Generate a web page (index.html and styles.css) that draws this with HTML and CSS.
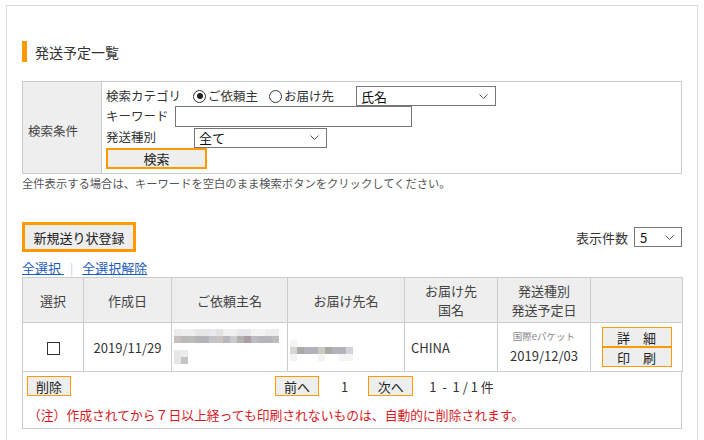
FILE: index.html
```html
<!DOCTYPE html>
<html lang="ja">
<head>
<meta charset="utf-8">
<link rel="stylesheet" href="styles.css">
</head>
<body>
<div class="panel">
  <h2 class="title">発送予定一覧</h2>

  <table class="search">
    <tr>
      <th class="search-label">検索条件</th>
      <td class="search-body">
        <div class="srow r1">
          <span class="lbl-cat">検索カテゴリ</span>
          <span class="radio on"></span><span class="rtext1">ご依頼主</span>
          <span class="radio"></span><span class="rtext2">お届け先</span>
          <div class="select sel-name"><span>氏名</span>
            <svg class="chev" width="9" height="5" viewBox="0 0 9 5"><path d="M0.5 0.5 L4.5 4.5 L8.5 0.5" fill="none" stroke="#555" stroke-width="1"/></svg>
          </div>
        </div>
        <div class="srow r2">
          <span class="lbl-key">キーワード</span>
          <div class="textbox"></div>
        </div>
        <div class="srow r3">
          <span class="lbl-type">発送種別</span>
          <div class="select sel-type"><span>全て</span>
            <svg class="chev" width="9" height="5" viewBox="0 0 9 5"><path d="M0.5 0.5 L4.5 4.5 L8.5 0.5" fill="none" stroke="#555" stroke-width="1"/></svg>
          </div>
        </div>
        <div class="srow r4">
          <button class="btn-search">検索</button>
        </div>
      </td>
    </tr>
  </table>
  <p class="hint">全件表示する場合は、キーワードを空白のまま検索ボタンをクリックしてください。</p>

  <div class="toolbar">
    <button class="btn-new">新規送り状登録</button>
    <div class="perpage">
      <span class="perpage-label">表示件数</span>
      <div class="select sel-count"><span>5</span>
        <svg class="chev" width="9" height="5" viewBox="0 0 9 5"><path d="M0.5 0.5 L4.5 4.5 L8.5 0.5" fill="none" stroke="#555" stroke-width="1"/></svg>
      </div>
    </div>
  </div>

  <div class="links">
    <a href="#" class="link">全選択 </a><span class="sep">|</span><a href="#" class="link">全選択解除</a>
  </div>

  <table class="list">
    <colgroup>
      <col class="c1"><col class="c2"><col class="c3"><col class="c4"><col class="c5"><col class="c6"><col class="c7">
    </colgroup>
    <tr class="head">
      <th>選択</th>
      <th>作成日</th>
      <th>ご依頼主名</th>
      <th>お届け先名</th>
      <th><div class="hl">お届け先</div><div class="hl">国名</div></th>
      <th><div class="hl">発送種別</div><div class="hl">発送予定日</div></th>
      <th></th>
    </tr>
    <tr class="data">
      <td class="center"><span class="checkbox"></span></td>
      <td class="center">2019/11/29</td>
      <td class="blur-cell">
        <div class="blur b1a"></div>
        <div class="blur b1b"></div>
        <div class="blur b1c"></div>
        <div class="blur b1d"></div>
      </td>
      <td class="blur-cell2">
        <div class="blur b2a"></div>
        <div class="blur b2b"></div>
        <div class="blur b2c"></div>
      </td>
      <td class="country">CHINA</td>
      <td class="center type-cell">
        <div class="type-name">国際eパケット</div>
        <div class="type-date">2019/12/03</div>
      </td>
      <td class="center act-cell">
        <button class="btn-act">詳　細</button>
        <button class="btn-act">印　刷</button>
      </td>
    </tr>
  </table>
  <div class="footer">
    <div class="pager">
      <button class="btn-sm btn-del">削除</button>
      <button class="btn-sm btn-prev">前へ</button>
      <span class="page-no">1</span>
      <button class="btn-sm btn-next">次へ</button>
      <span class="page-count">1 &nbsp;- &nbsp;1 / 1 件</span>
    </div>
    <p class="notice">（注）作成されてから７日以上経っても印刷されないものは、自動的に削除されます。</p>
  </div>
</div>
</body>
</html>
```

FILE: styles.css
```css
* { box-sizing: border-box; }
html, body { margin: 0; padding: 0; background: #fff; }
body {
  font-family: "Noto Sans CJK JP", "Noto Sans", sans-serif;
  color: #333;
  font-size: 12.5px;
  overflow: hidden;
}
button { font-family: inherit; cursor: pointer; }

.panel {
  margin: 5px 0 0 6px;
  width: 692px;
  height: 440px;
  border: 1px solid #ddd;
  border-bottom: none;
  padding: 35px 15px 0 15px;
}

.title {
  margin: 0;
  display: flex;
  align-items: center;
  height: 21px;
  border-left: 5px solid #f90;
  padding-left: 8px;
  font-size: 14px;
  font-weight: normal;
  color: #333;
  line-height: 1;
}

/* search box */
.search {
  margin-top: 19px;
  width: 660px;
  border-collapse: collapse;
  border: 1px solid #ccc;
}
.search-label {
  width: 79px;
  background: #eee;
  border-right: 1px solid #ccc;
  text-align: left;
  font-weight: normal;
  padding: 6px 0 0 5px;
  vertical-align: middle;
  font-size: 12.5px;
  color: #444;
}
.search-body { padding: 4px 5px 4px 4px; vertical-align: top; }
.srow { display: flex; align-items: center; line-height: 1; }
.r1 { height: 20px; }
.r2 { height: 21px; }
.r3 { height: 21px; }
.r4 { height: 21px; }
.lbl-cat { width: 87px; }
.lbl-key { width: 69px; }
.lbl-type { width: 88px; }
.radio {
  display: inline-block;
  width: 13px;
  height: 13px;
  border: 1px solid #333;
  border-radius: 50%;
  margin-right: 2px;
  position: relative;
  background: #fff;
}
.radio.on::after {
  content: "";
  position: absolute;
  left: 2.5px; top: 2.5px;
  width: 6px; height: 6px;
  border-radius: 50%;
  background: #222;
}
.rtext1 { width: 61px; }
.rtext2 { width: 72px; }

.select {
  display: flex;
  align-items: center;
  justify-content: space-between;
  height: 20px;
  border: 1px solid #777;
  background: #fff;
  padding: 0 7px 0 4px;
  font-size: 13px;
  color: #111;
}
.sel-name { width: 140px; }
.sel-type { width: 133px; }
.sel-count { width: 48px; }
.chev { display: block; }

.textbox {
  width: 237px;
  height: 21px;
  border: 1px solid #767676;
  background: #fff;
}
.btn-search {
  width: 101px;
  height: 21px;
  border: 2px solid #f90;
  background: #eee;
  font-size: 13px;
  color: #222;
  padding: 0;
  line-height: 1;
}

.hint {
  margin: 1px 0 0 0;
  font-size: 11.3px;
  line-height: 16px;
  color: #555;
}

.toolbar {
  margin-top: 31px;
  display: flex;
  align-items: center;
  justify-content: space-between;
  height: 30px;
}
.btn-new {
  width: 114px;
  height: 30px;
  border: 3px solid #f90;
  background: #eee;
  font-size: 13px;
  color: #222;
  padding: 0;
  line-height: 1;
}
.perpage { display: flex; align-items: center; }
.perpage-label { font-size: 13px; color: #333; margin-right: 6px; }
.sel-count { padding-left: 5px; }

.links {
  margin-top: 8px;
  height: 17px;
  line-height: 16px;
  font-size: 13px;
}
.link { color: #1d5cb8; text-decoration: underline; }
.sep { color: #ccc; margin: 0 9px 0 6px; font-size: 12px; }

/* list table */
.list {
  width: 660px;
  border-collapse: collapse;
  table-layout: fixed;
}
.list th, .list td { border: 1px solid #ccc; padding: 0; }
.c1 { width: 61px; }
.c2 { width: 88px; }
.c3 { width: 116px; }
.c4 { width: 117px; }
.c5 { width: 93px; }
.c6 { width: 93px; }
.c7 { width: 92px; }
.head th {
  height: 45px;
  background: #eee;
  font-weight: normal;
  color: #444;
  font-size: 13px;
  line-height: 17px;
  text-align: center;
}
.hl { height: 19px; line-height: 19px; }
.data td { height: 49px; font-size: 13px; color: #333; }
.center { text-align: center; }
.checkbox {
  display: inline-block;
  width: 13px;
  height: 13px;
  border: 1px solid #333;
  background: #fff;
  vertical-align: middle;
  margin-left: 1px;
}
.country { padding-left: 6px !important; }
.type-name { font-size: 9.5px; color: #888; line-height: 14px; }
.type-date { font-size: 13px; line-height: 18px; margin-top: 4px; color: #333; }
.act-cell { vertical-align: middle; }
.btn-act {
  display: block;
  margin: 0 auto;
  width: 70px;
  height: 20px;
  border: 1px solid #f90;
  background: #eee;
  font-size: 13px;
  color: #222;
  padding: 0;
  line-height: 1;
}

/* pixelated blurred names */
.blur-cell, .blur-cell2 { vertical-align: top; padding-left: 2px !important; }
.blur { height: 7px; }
.b1a { margin-top: 6px; width: 105px;
  background: linear-gradient(90deg, #ebebeb 0 7px, #eeeeee 7px 21px, #e6e6e6 21px 35px, #e9e9ee 35px 42px, #e2e2e2 42px 49px, #f0f0f0 49px 63px, #e8e8ea 63px 77px, #f3f3f3 77px 91px, #ededed 91px 105px); }
.b1b { width: 105px;
  background: linear-gradient(90deg, #c6c1bf 0 7px, #b9b9b9 7px 14px, #bdbcb6 14px 21px, #b5b5b9 21px 35px, #c3c3c6 35px 42px, #c9c7bd 42px 49px, #b7b7c0 49px 56px, #cbcbcb 56px 63px, #b7b2b2 63px 70px, #ab9ea2 70px 77px, #bcbcc0 77px 84px, #b5b5bb 84px 98px, #bdbdbd 98px 105px); }
.b1c { margin-top: 7px; width: 14px;
  background: linear-gradient(90deg, #e8e8e8 0 7px, #ececec 7px 14px); }
.b1d { width: 14px;
  background: linear-gradient(90deg, #e6e6e6 0 7px, #c8c2c2 7px 14px); }
.b2a { margin-top: 17px; width: 7px; background: #f4f4f4; }
.b2b { width: 63px;
  background: linear-gradient(90deg, #d8d6d2 0 7px, #a8aaa4 7px 14px, #b2b2ba 14px 28px, #ccc8c2 28px 35px, #a8aaa4 35px 42px, #b4b2bc 42px 56px, #d4d4d8 56px 63px); }
.b2c { width: 63px;
  background: linear-gradient(90deg, #f2f2f2 0 7px, #ffffff 7px 28px, #f2f2f2 28px 35px, #ffffff 35px 49px, #f4f4f4 49px 63px); }

/* footer */
.footer {
  width: 660px;
  height: 57px;
  border: 1px solid #ccc;
  border-top: none;
  padding: 4px 4px 0 4px;
}
.pager { display: flex; align-items: center; height: 20px; font-size: 13px; color: #333; }
.btn-sm {
  height: 20px;
  border: 1px solid #f90;
  background: #eee;
  font-size: 13px;
  color: #222;
  padding: 0;
  line-height: 1;
}
.btn-del { width: 44px; }
.btn-prev { width: 44px; margin-left: 204px; }
.page-no { margin-left: 22px; }
.btn-next { width: 45px; margin-left: 20px; }
.page-count { margin-left: 16px; }
.notice {
  margin: 10px 0 0 1px;
  font-size: 12.8px;
  line-height: 18px;
  color: #d61a24;
}
```
